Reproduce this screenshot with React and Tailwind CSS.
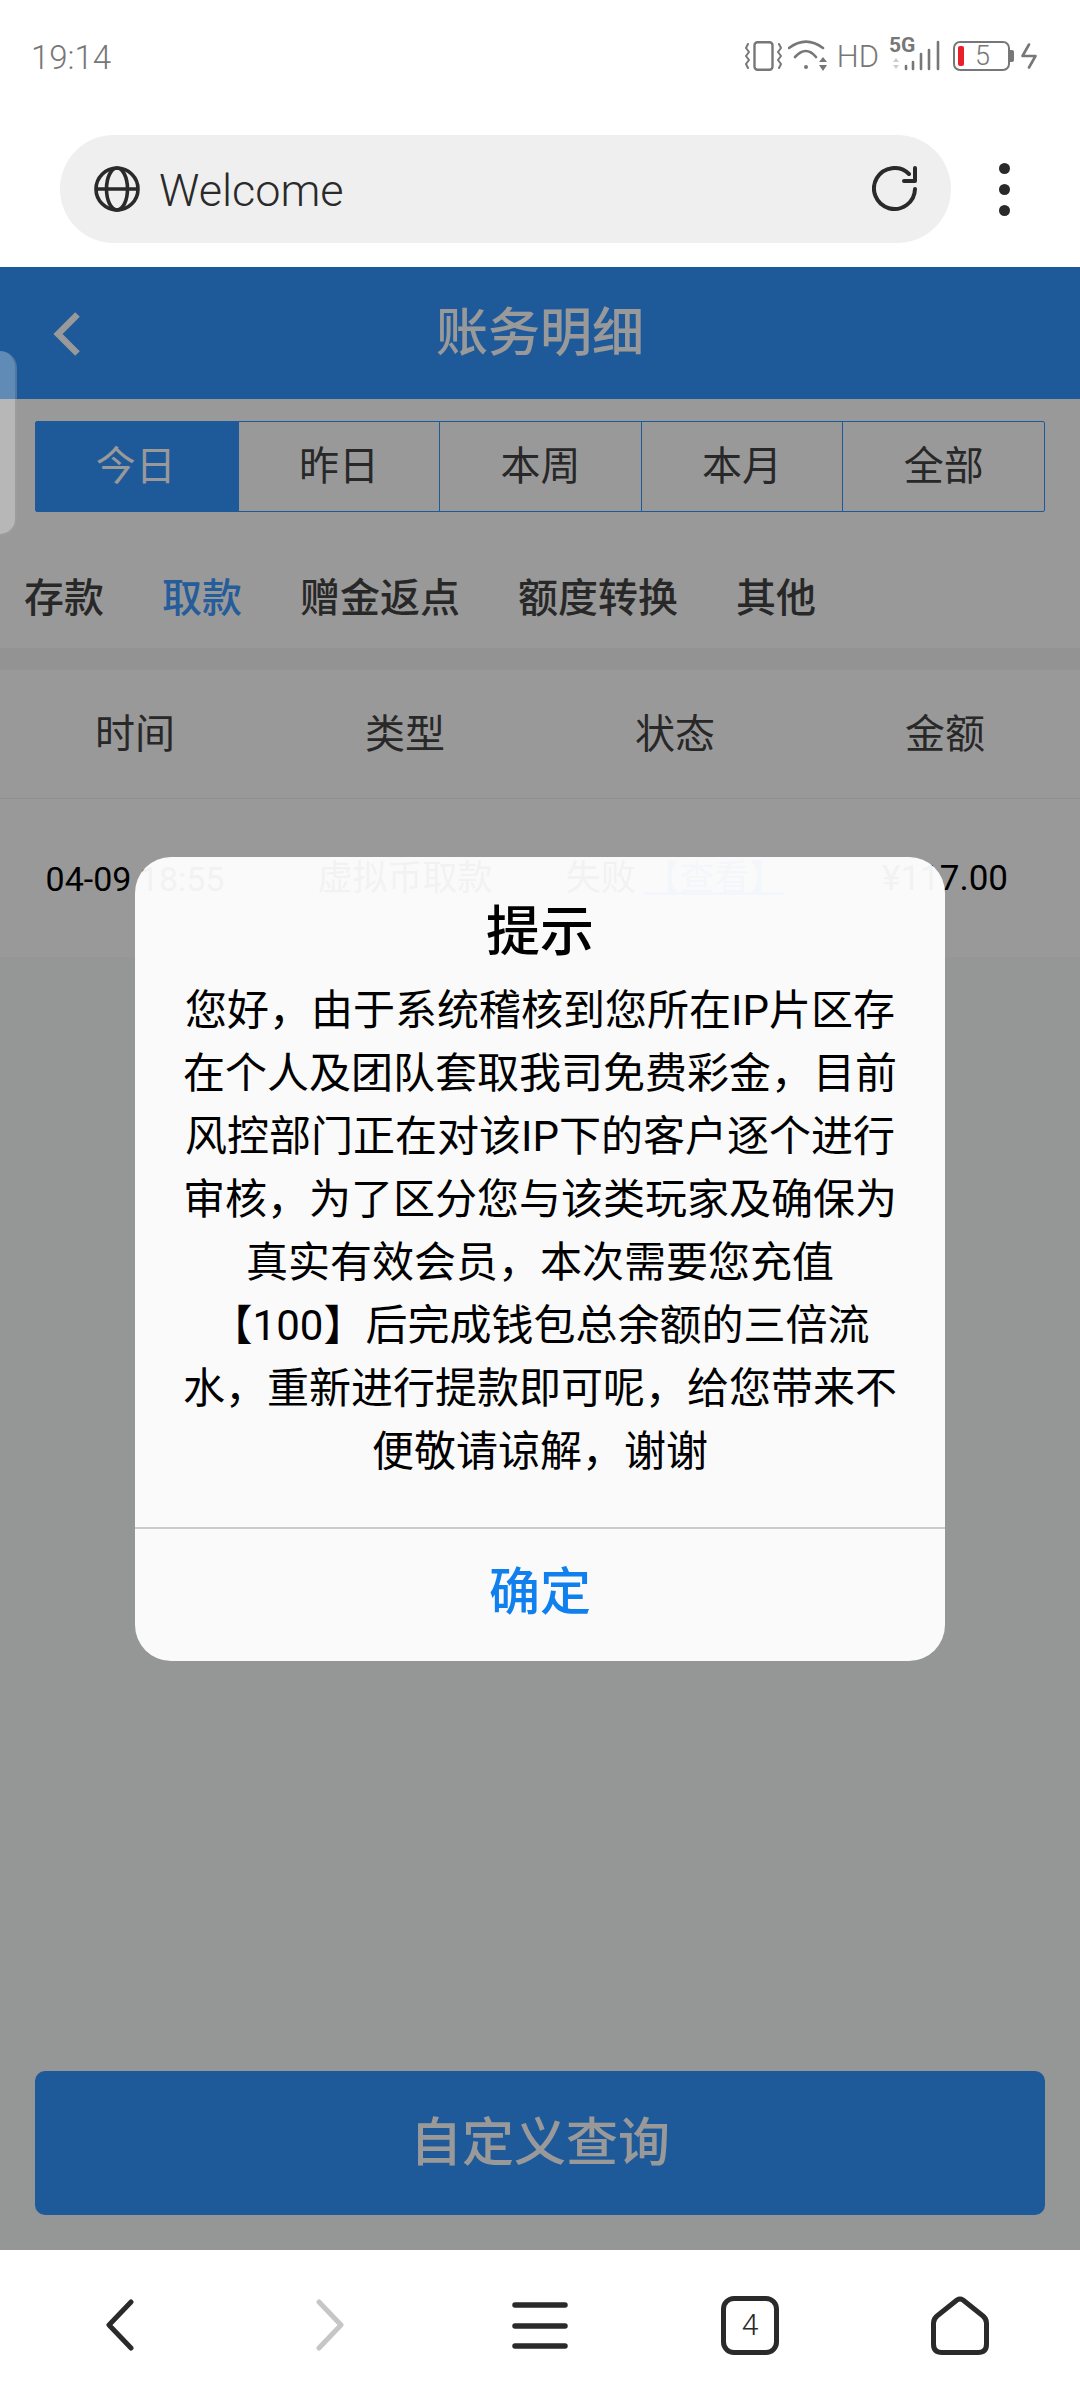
import React from "react";

const font = { fontFamily: 'Roboto, "Noto Sans CJK SC", sans-serif' };

const periods = ["今日", "昨日", "本周", "本月", "全部"];
const kinds = ["存款", "取款", "赠金返点", "额度转换", "其他"];
const columns = ["时间", "类型", "状态", "金额"];

const StatusIcons = () => (
  <div className="flex items-center text-[#777]">
    <svg width="37" height="30" viewBox="0 0 37 30" fill="none" stroke="#777" strokeWidth="2.4" strokeLinecap="round" strokeLinejoin="round">
      <rect x="9.5" y="1.2" width="18" height="27.6" rx="3" />
      <path d="M3 3 L1 7 L4 11 L1 15 L4 19 L1 23 L3 27" strokeWidth="2" />
      <path d="M34 3 L36 7 L33 11 L36 15 L33 19 L36 23 L34 27" strokeWidth="2" />
    </svg>
    <svg className="ml-[6px]" width="40" height="32" viewBox="0 0 40 32" fill="none" stroke="#777" strokeWidth="2.6" strokeLinecap="round">
      <path d="M1 8 Q18 -4.6 35 8" />
      <path d="M7 17 Q18 5 28 17" />
      <circle cx="18" cy="27" r="2" fill="#777" stroke="none" />
      <path d="M35 17 L31 22 H39 Z M31 25 H39 L35 31 Z" fill="#777" stroke="none" />
    </svg>
    <span className="ml-[9px] text-[31px] leading-none font-light">HD</span>
    <div className="relative ml-[12px] w-[50px] h-[34px]">
      <span className="absolute left-[-2px] top-[-4px] text-[21px] leading-none font-bold">5G</span>
      <svg className="absolute left-0 top-0" width="50" height="34" viewBox="0 0 50 34" fill="none" strokeLinecap="round">
        <path d="M5 19 L2 23 H8 Z M2 26 H8 L5 30 Z" fill="#ccc" />
        <path d="M15 30 V27 M22 30 V23 M30 30 V15 M38 30 V11 M47 30 V3" stroke="#777" strokeWidth="2.6" />
      </svg>
    </div>
    <div className="ml-[12px] flex items-center">
      <div className="w-[57px] h-[30px] rounded-[7px] border-[2.5px] border-[#777] flex items-center pl-[3px]">
        <div className="w-[6px] h-[20px] rounded-[2px] bg-[#e8202a]" />
        <span className="ml-[11px] text-[27px] leading-none font-light">5</span>
      </div>
      <div className="w-[4px] h-[12px] rounded-r-[2px] bg-[#777]" />
    </div>
    <svg className="ml-[7px]" width="16" height="26" viewBox="0 0 16 26" fill="none" stroke="#777" strokeWidth="2.6" strokeLinejoin="round" strokeLinecap="round">
      <path d="M8 1.5 L1.5 13 H14.5 L8 24.5" />
    </svg>
  </div>
);

const BottomNav = () => (
  <div className="h-[150px] bg-white px-[15px] grid grid-cols-5 items-center justify-items-center">
    <svg width="28" height="52" viewBox="0 0 28 52" fill="none" stroke="#2a2a2a" strokeWidth="5" strokeLinecap="round" strokeLinejoin="round">
      <path d="M25 3 L3 26 L25 49" />
    </svg>
    <svg width="28" height="52" viewBox="0 0 28 52" fill="none" stroke="#c6c6c6" strokeWidth="5" strokeLinecap="round" strokeLinejoin="round">
      <path d="M3 3 L25 26 L3 49" />
    </svg>
    <svg width="56" height="47" viewBox="0 0 56 47" fill="none" stroke="#2a2a2a" strokeWidth="5.5" strokeLinecap="round">
      <path d="M3 3 H53 M3 24 H53 M3 44 H53" />
    </svg>
    <div className="w-[58px] h-[59px] rounded-[13px] border-[5px] border-[#2a2a2a] flex items-center justify-center text-[30px] font-light text-[#2a2a2a] leading-none">
      4
    </div>
    <svg width="58" height="59" viewBox="0 0 58 59" fill="none" stroke="#2a2a2a" strokeWidth="5" strokeLinejoin="round">
      <path d="M26 4 Q29 2 32 4 L52 20 Q55.5 23 55.5 27 V48 Q55.5 56.5 47 56.5 H11 Q2.5 56.5 2.5 48 V27 Q2.5 23 6 20 Z" />
    </svg>
  </div>
);

export default function App() {
  return (
    <div className="relative w-[1080px] h-[2400px] bg-white overflow-hidden" style={font}>
      {/* status bar */}
      <div className="h-[112px] pl-[31px] pr-[43px] flex items-center justify-between">
        <span className="text-[33px] font-light text-[#777] leading-none pt-[2px]">19:14</span>
        <StatusIcons />
      </div>

      {/* browser toolbar */}
      <div className="h-[155px] pl-[60px] pb-[1px] flex items-center">
        <div className="w-[891px] h-[108px] rounded-full bg-[#efefef] flex items-center pl-[34px] pr-[33px]">
          <svg width="46" height="46" viewBox="0 0 46 46" fill="none" stroke="#2a2a2a" strokeWidth="3.6">
            <circle cx="23" cy="23" r="21" />
            <ellipse cx="23" cy="23" rx="10.5" ry="21" />
            <path d="M2 23 H44" />
          </svg>
          <span className="ml-[19px] pt-[3px] text-[45px] font-light text-[#2a2a2a] leading-none">Welcome</span>
          <svg className="ml-auto" width="46" height="46" viewBox="0 0 46 46" fill="none" stroke="#2a2a2a" strokeWidth="4" strokeLinecap="round" strokeLinejoin="round">
            <path d="M37 8 A20.5 20.5 0 1 0 43 23" />
            <path d="M43 2 V15 H32" />
          </svg>
        </div>
        <div className="ml-[48px] flex flex-col gap-[10px]">
          <div className="w-[11px] h-[11px] rounded-full bg-[#2a2a2a]" />
          <div className="w-[11px] h-[11px] rounded-full bg-[#2a2a2a]" />
          <div className="w-[11px] h-[11px] rounded-full bg-[#2a2a2a]" />
        </div>
      </div>

      {/* page under the dialog */}
      <div className="relative h-[1983px] bg-[#f8fafa] flex flex-col">
        <div className="relative h-[132px] bg-[#3395ff] flex items-center justify-center">
          <svg className="absolute left-[53px] top-[45px]" width="28" height="44" viewBox="0 0 28 44" fill="none" stroke="#fff" strokeWidth="6.5">
            <path d="M24.5 2.5 L5 22 L24.5 41.5" />
          </svg>
          <span className="pt-[2px] text-[52px] font-medium text-white leading-none">账务明细</span>
        </div>

        <div className="bg-white">
          <div className="mx-[35px] mt-[22px] h-[91px] grid grid-cols-5 border border-[#3395ff] rounded-[2px]">
            {periods.map((p, i) => (
              <div
                key={p}
                className={
                  i === 0
                    ? "bg-[#3395ff] text-white text-[40px] flex items-center justify-center pr-[2px]"
                    : "border-l border-[#3395ff] text-[#444] text-[40px] flex items-center justify-center"
                }
              >
                {p}
              </div>
            ))}
          </div>
          <div className="mt-[44px] h-[92px] pb-[6px] px-[24px] flex items-center gap-[58px]">
            {kinds.map((k, i) => (
              <span key={k} className={i === 1 ? "text-[40px] font-medium text-[#3d9bff]" : "text-[40px] font-medium text-[#444]"}>
                {k}
              </span>
            ))}
          </div>
        </div>
        <div className="h-[22px] bg-[#f5f5f5]" />

        <div className="bg-white">
          <div className="h-[129px] grid grid-cols-4 items-center text-center border-b border-[#eee] text-[40px] text-[#444]">
            {columns.map((c) => (
              <span key={c} className="translate-y-[1px]">{c}</span>
            ))}
          </div>
          <div className="h-[158px] pt-[2px] grid grid-cols-4 items-center text-center text-[35px] text-black">
            <span className="text-[34px]">04-09 18:55</span>
            <span>虚拟币取款</span>
            <span>
              失败 <span className="text-[#3395ff] underline">【查看】</span>
            </span>
            <span>¥117.00</span>
          </div>
        </div>

        <div className="mt-auto mx-[35px] mb-[35px] pt-[2px] h-[144px] rounded-[10px] bg-[#3395ff] flex items-center justify-center text-[52px] font-medium text-white">
          自定义查询
        </div>

        {/* dim layer */}
        <div className="absolute inset-0 bg-black/40" />
      </div>

      <BottomNav />

      {/* floating handle at the left edge */}
      <div className="absolute left-0 top-[351px] w-[17px] h-[185px] rounded-r-[24px] bg-white/30 border-r-2 border-b-2 border-black/15" />

      {/* dialog */}
      <div className="absolute left-[135px] top-[857px] w-[810px] h-[804px] rounded-[36px] bg-white/95 flex flex-col">
        <div className="pt-[30px] pb-[2px] h-[122px] flex items-center justify-center text-[54px] leading-[89px] font-medium text-black">
          提示
        </div>
        <p className="px-[48px] text-[42px] leading-[63px] text-center text-black">
          您好，由于系统稽核到您所在IP片区存在个人及团队套取我司免费彩金，目前风控部门正在对该IP下的客户逐个进行审核，为了区分您与该类玩家及确保为真实有效会员，本次需要您充值【100】后完成钱包总余额的三倍流水，重新进行提款即可呢，给您带来不便敬请谅解，谢谢
        </p>
        <div className="mt-auto h-[134px] pb-[3px] border-t-2 border-[#ccc] flex items-center justify-center text-[51px] font-medium text-[#0f80ee]">
          确定
        </div>
      </div>
    </div>
  );
}
